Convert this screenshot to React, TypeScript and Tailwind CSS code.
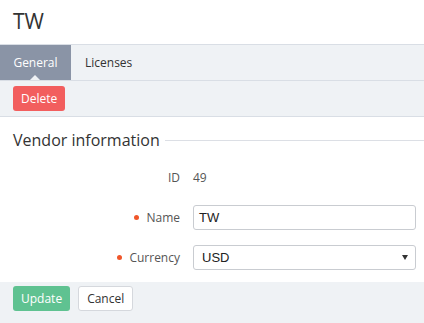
import React from "react";

const Field = ({ label, required, children }: { label: string; required?: boolean; children: React.ReactNode }) => (
  <div className="flex h-[25px] items-center">
    <div className="flex w-[180px] items-center justify-end text-[#555]">
      {required && <span className="mr-[7px] h-[5px] w-[5px] rounded-full bg-[#f0562a]" />}
      {label}
    </div>
    <div className="ml-[13px] w-[223px]">{children}</div>
  </div>
);

export default function App() {
  return (
    <div className="flex h-[323px] w-[424px] flex-col bg-white font-['Open_Sans',sans-serif] text-[12px] text-[#333]">
      <div className="flex h-[44px] items-center px-[13px] text-[21px] text-[#333]">TW</div>

      <div className="flex h-[37px] border-y border-[#d9dee5] bg-[#eff2f5]">
        <div className="relative flex w-[71px] items-center justify-center bg-[#8a94a6] text-white">
          General
          <span className="absolute bottom-0 left-[30px] border-x-[5px] border-b-[5px] border-x-transparent border-b-[#eff2f5]" />
        </div>
        <div className="flex items-center px-[14px] text-[#333]">Licenses</div>
      </div>

      <div className="flex h-[36px] items-center border-b border-[#d9dee5] bg-[#eff2f5] px-[13px]">
        <button className="h-[25px] rounded-[3px] bg-[#f25e5e] px-[8px] text-white">Delete</button>
      </div>

      <div className="flex-1">
        <div className="mt-[11px] flex h-[24px] items-center pl-[13px]">
          <span className="text-[16px] text-[#333]">Vendor information</span>
          <span className="ml-[5px] h-px flex-1 bg-[#dcdfe5]" />
        </div>

        <div className="mt-[13px] flex flex-col gap-[15px]">
          <Field label="ID">
            <span className="text-[#555]">49</span>
          </Field>
          <Field label="Name" required>
            <div className="flex h-[25px] items-center rounded-[3px] border border-[#c9ccd1] bg-white pl-[5px] font-['Liberation_Sans',sans-serif] text-[13px] text-[#222]">
              TW
            </div>
          </Field>
          <Field label="Currency" required>
            <div className="flex h-[25px] items-center justify-between rounded-[3px] border border-[#c9ccd1] bg-white pl-[8px] pr-[7px] font-['Liberation_Sans',sans-serif] text-[13px] text-[#222]">
              USD
              <span className="border-x-[3px] border-t-[5px] border-x-transparent border-t-[#333]" />
            </div>
          </Field>
        </div>
      </div>

      <div className="flex h-[41px] items-start gap-[8px] bg-[#eff2f5] px-[13px] pt-[4px]">
        <button className="h-[25px] rounded-[3px] bg-[#5fc291] px-[8px] text-white">Update</button>
        <button className="h-[25px] rounded-[3px] border border-[#d5d8dd] bg-white px-[8px] text-[#333]">Cancel</button>
      </div>
    </div>
  );
}
